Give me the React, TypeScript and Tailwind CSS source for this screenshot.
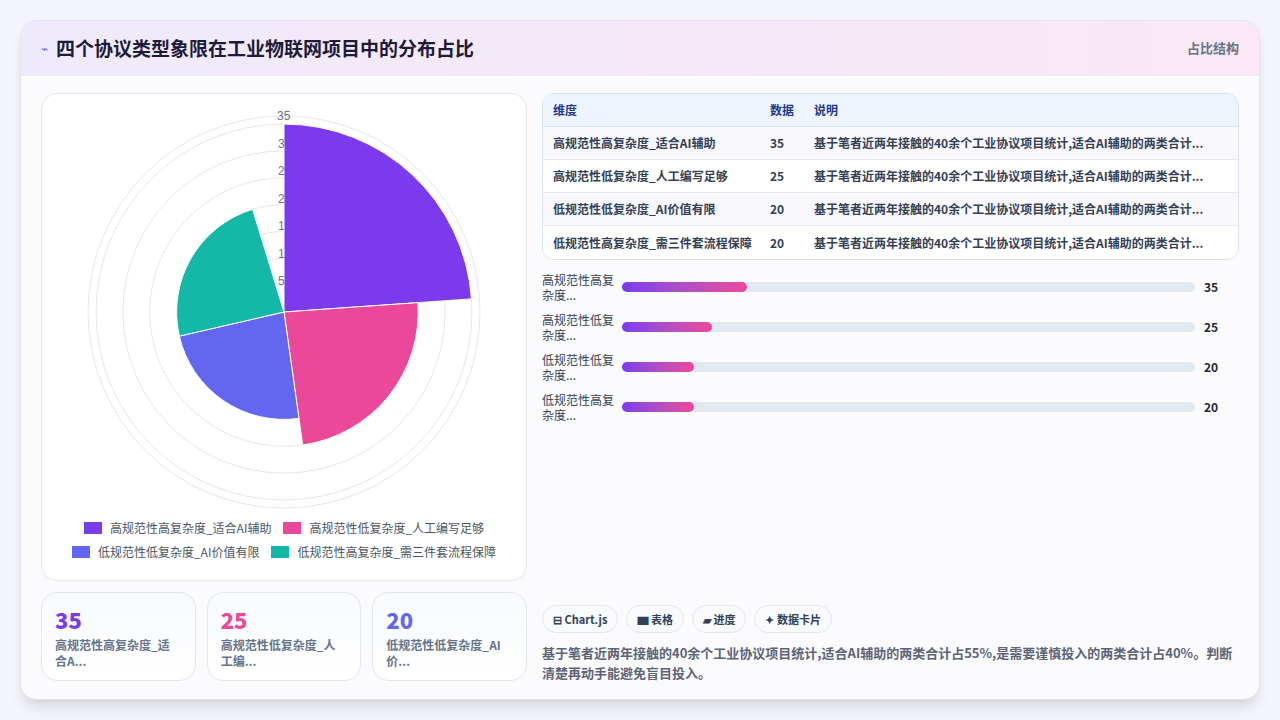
import React from "react";

const font = { fontFamily: '"Noto Sans CJK SC", "Noto Sans", sans-serif' };

const rows = [
  { name: "高规范性高复杂度_适合AI辅助", value: 35, color: "#7c3aed" },
  { name: "高规范性低复杂度_人工编写足够", value: 25, color: "#ec4899" },
  { name: "低规范性低复杂度_AI价值有限", value: 20, color: "#6366f1" },
  { name: "低规范性高复杂度_需三件套流程保障", value: 20, color: "#14b8a6" },
];
const note = "基于笔者近两年接触的40余个工业协议项目统计,适合AI辅助的两类合计...";

const cx = 242;
const cy = 218;
const unit = 5.37;

function sector(r: number, a0: number, a1: number) {
  const t0 = (a0 * Math.PI) / 180;
  const t1 = (a1 * Math.PI) / 180;
  const x0 = cx + r * Math.cos(t0);
  const y0 = cy + r * Math.sin(t0);
  const x1 = cx + r * Math.cos(t1);
  const y1 = cy + r * Math.sin(t1);
  const large = a1 - a0 > 180 ? 1 : 0;
  return `M${cx},${cy} L${x0},${y0} A${r},${r} 0 ${large} 1 ${x1},${y1} Z`;
}

const angles = [
  [-90, -4],
  [-4, 82],
  [82, 167],
  [167, 253],
];

const PolarChart = () => (
  <svg width="485" height="420" className="block">
    {[1, 2, 3, 4, 5, 6, 7].map((k) => (
      <circle key={k} cx={cx} cy={cy} r={k * 5 * unit} fill="none" stroke="#e5e7eb" strokeWidth="1" />
    ))}
    <circle cx={cx} cy={cy} r={196} fill="none" stroke="#e5e7eb" strokeWidth="1" />
    {rows.map((r, i) => (
      <path key={r.name} d={sector(r.value * unit, angles[i][0], angles[i][1])} fill={r.color} stroke="#fff" strokeWidth="1" />
    ))}
    {["35", "3", "2", "2", "1", "1", "5"].map((t, i) => (
      <text key={i} x={i === 0 ? cx - 7 : cx - 6} y={cy - 196 + i * 27.5 + 4} fontSize="12" fill="#6b7280" fontFamily="Liberation Sans, sans-serif">
        {t}
      </text>
    ))}
  </svg>
);

export default function App() {
  return (
    <div className="w-[1280px] h-[720px] bg-[#f4f5fb] p-5" style={font}>
      <div className="h-[680px] rounded-2xl border border-[#e4e4f0] bg-[#fbfbfe] shadow-lg overflow-hidden flex flex-col">
        <div className="h-[55px] shrink-0 flex items-center justify-between px-5 border-b border-[#ece9f6] bg-gradient-to-r from-[#efeafb] to-[#fbe8f4]">
          <div className="flex items-center gap-2">
            <span className="text-[#6366f1] text-xs">⌁</span>
            <h1 className="text-[19px] font-bold text-[#1e1b3a]">四个协议类型象限在工业物联网项目中的分布占比</h1>
          </div>
          <span className="text-[13px] font-semibold text-[#64748b]">占比结构</span>
        </div>
        <div className="flex gap-[15px] px-5 pt-[17px]">
          <div className="w-[486px] shrink-0 flex flex-col gap-[11px]">
            <div className="h-[488px] rounded-2xl border border-[#e2e8f0] bg-white">
              <PolarChart />
              <div className="flex flex-col items-center gap-[6px] text-[12px] text-[#4b5563] mt-[5px]">
                <div className="flex gap-3">
                  {rows.slice(0, 2).map((r) => (
                    <span key={r.name} className="flex items-center gap-2">
                      <span className="w-[18px] h-[12px]" style={{ background: r.color }} />
                      {r.name}
                    </span>
                  ))}
                </div>
                <div className="flex gap-3">
                  {rows.slice(2).map((r) => (
                    <span key={r.name} className="flex items-center gap-2">
                      <span className="w-[18px] h-[12px]" style={{ background: r.color }} />
                      {r.name}
                    </span>
                  ))}
                </div>
              </div>
            </div>
            <div className="grid grid-cols-3 gap-[11px]">
              {rows.slice(0, 3).map((r, i) => (
                <div key={r.name} className="h-[89px] rounded-2xl border border-[#e0e7f3] bg-gradient-to-b from-[#f8faff] to-white px-[13px] pt-[12px]">
                  <div className="text-[22px] font-extrabold leading-[28px]" style={{ color: r.color }}>
                    {r.value}
                  </div>
                  <div className="text-[12px] font-semibold leading-[16px] text-[#64748b] mt-[4px]">
                    {["高规范性高复杂度_适合A...", "高规范性低复杂度_人工编...", "低规范性低复杂度_AI价..."][i]}
                  </div>
                </div>
              ))}
            </div>
          </div>
          <div className="flex-1 flex flex-col h-[590px]">
            <div className="rounded-xl border border-[#d9e2ef] overflow-hidden bg-white text-[12px]">
              <div className="flex h-[33px] items-center bg-[#eef4fd] text-[#1e3a8a] font-semibold border-b border-[#d9e2ef]">
                <div className="w-[227px] pl-[10px]">维度</div>
                <div className="w-[44px]">数据</div>
                <div className="flex-1">说明</div>
              </div>
              {rows.map((r, i) => (
                <div key={r.name} className={`flex h-[33px] items-center font-semibold text-[#334155] ${i < 3 ? "border-b border-[#e5eaf2]" : ""} ${i % 2 ? "bg-white" : "bg-[#f8f8fd]"}`}>
                  <div className="w-[227px] pl-[10px]">{r.name}</div>
                  <div className="w-[44px]">{r.value}</div>
                  <div className="flex-1 truncate">{note}</div>
                </div>
              ))}
            </div>
            <div className="flex flex-col gap-[10px] mt-[12px]">
              {rows.map((r) => (
                <div key={r.name} className="flex items-center h-[30px]">
                  <div className="w-[80px] text-[12px] leading-[15px] text-[#374151]">
                    {r.name.slice(0, 6)}
                    <br />
                    杂度...
                  </div>
                  <div className="flex-1 h-[10px] rounded-full bg-[#e2e8f0]">
                    <div className="h-full rounded-full bg-gradient-to-r from-[#7c3aed] to-[#ec4899]" style={{ width: `${(r.value / 160) * 100}%` }} />
                  </div>
                  <div className="w-[44px] pl-[9px] text-[12px] font-bold text-[#1e293b]">{r.value}</div>
                </div>
              ))}
            </div>
            <div className="mt-auto">
              <div className="flex gap-2 text-[11px] font-semibold text-[#334155]">
                {["⊟ Chart.js", "▆ 表格", "▰ 进度", "✦ 数据卡片"].map((t) => (
                  <span key={t} className="h-[28px] px-[10px] flex items-center rounded-full border border-[#e2e8f0] bg-[#f8fafc]">
                    {t}
                  </span>
                ))}
              </div>
              <p className="mt-[10px] text-[13px] leading-[20px] font-semibold text-[#5b6577]">
                基于笔者近两年接触的40余个工业协议项目统计,适合AI辅助的两类合计占55%,是需要谨慎投入的两类合计占40%。判断清楚再动手能避免盲目投入。
              </p>
            </div>
          </div>
        </div>
      </div>
    </div>
  );
}
